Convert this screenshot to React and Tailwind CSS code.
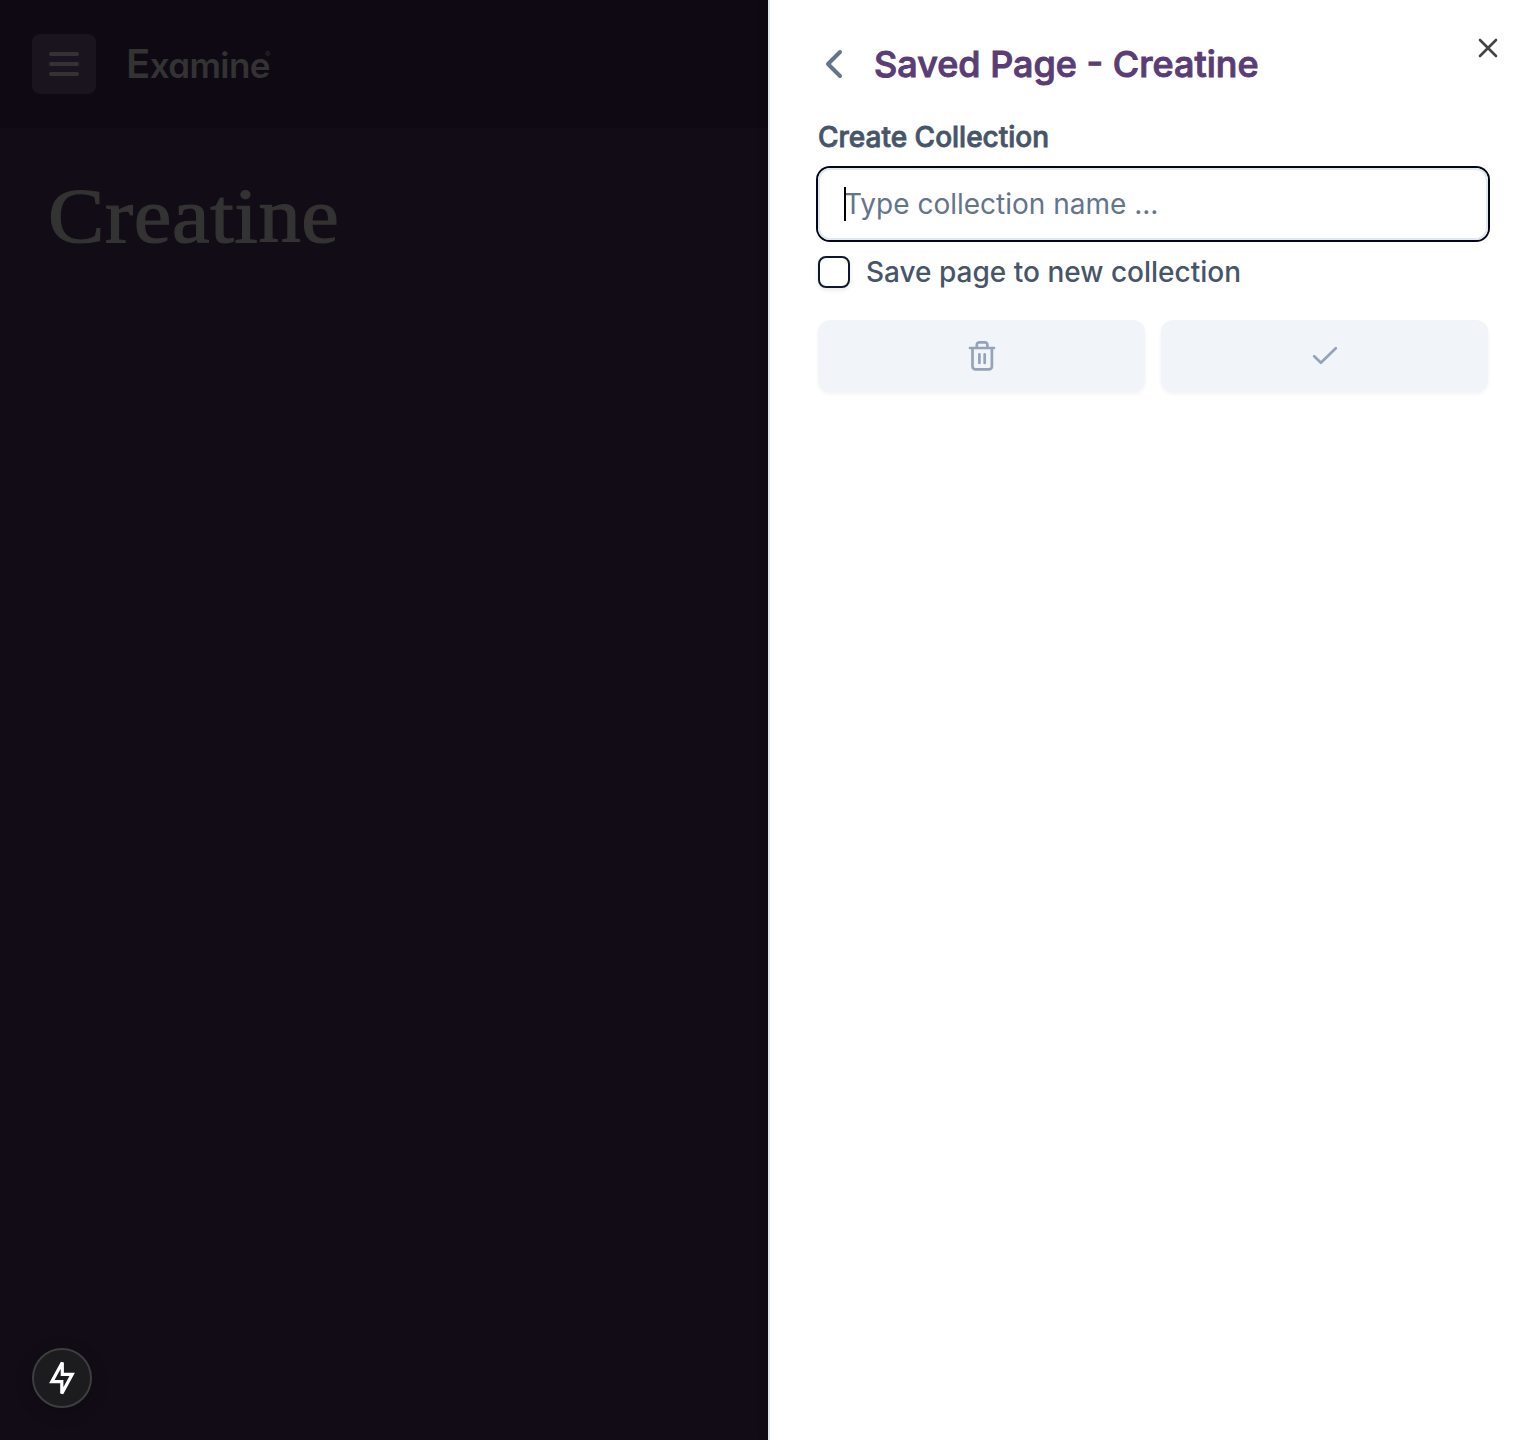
function MenuIcon() {
  return (
    <svg viewBox="0 0 32 24" className="h-6 w-8" fill="none" stroke="#333333" strokeWidth="4" strokeLinecap="round">
      <path d="M3 2h26M3 12h26M3 22h26" />
    </svg>
  );
}

function Backdrop() {
  return (
    <div className="relative flex h-full w-[768px] flex-col bg-[#120c16]">
      <header className="flex h-32 items-center bg-[#0f0913] pl-8">
        <button aria-label="Menu" className="flex h-[60px] w-16 items-center justify-center rounded-lg bg-[#1a141e]">
          <MenuIcon />
        </button>
        <div className="ml-[30px] flex items-start whitespace-nowrap font-['Inter',sans-serif] font-semibold text-[#333333]">
          <div className="w-[144px] text-[35px] leading-[58px] tracking-[-0.6px] first-letter:text-[40px] [font-feature-settings:'cv11']">
            Examine
          </div>
          <span className="-ml-[5px] mt-[12px] text-[8px] leading-[14px]">®</span>
        </div>
      </header>
      <h1 className="ml-12 mt-[43px] origin-left scale-x-[1.07] font-['Liberation_Serif',serif] text-[79px] leading-[90px] tracking-[0.6px] text-[#333333] [-webkit-text-stroke:1.2px_#333333]">
        Creatine
      </h1>
      <button
        aria-label="Quick actions"
        className="absolute bottom-8 left-8 flex size-[60px] items-center justify-center rounded-full border-2 border-[#3e3e40] bg-[#1c1c1e] shadow-[0_4px_16px_rgba(0,0,0,0.25)]"
      >
        <svg viewBox="0 0 32 36" className="h-9 w-8" fill="none" stroke="#ffffff" strokeWidth="3.2" strokeMiterlimit="3">
          <path d="M16.3 2.5V14.3H26.2L15.8 33.5V21.7H5.8Z" />
        </svg>
      </button>
    </div>
  );
}

function SavedPanel() {
  return (
    <aside className="relative h-full w-[768px] border-l-2 border-[#e2e8f0] bg-white pl-12 pr-12 font-['Inter',sans-serif] shadow-[0_0_12px_rgba(0,0,0,0.1)]">
      <button aria-label="Close" className="absolute right-8 top-8 flex size-8 items-center justify-center">
        <svg viewBox="0 0 32 32" className="size-8" fill="none" stroke="#444444" strokeWidth="2.6" strokeLinecap="round">
          <path d="M8 8l16 16M24 8L8 24" />
        </svg>
      </button>
      <div className="flex h-[72px] items-end">
        <button aria-label="Back" className="mb-[-10px] flex h-9 w-8 items-center justify-center">
          <svg viewBox="0 0 32 36" className="h-9 w-8" fill="none" stroke="#64748b" strokeWidth="4" strokeLinecap="round" strokeLinejoin="round">
            <path d="M22 6L10 18l12 12" />
          </svg>
        </button>
        <h2 className="mb-[-16px] ml-6 whitespace-nowrap text-[36px] font-medium leading-[48px] text-[#5a3d74] [-webkit-text-stroke:1px_#5a3d74]">
          Saved Page - Creatine
        </h2>
      </div>
      <div className="mt-[46px] text-[28px] font-medium leading-[38px] text-[#475569] [-webkit-text-stroke:0.8px_#475569]">
        Create Collection
      </div>
      <div className="relative mt-3 h-[72px] rounded-xl border-2 border-[#e2e8f0] ring-2 ring-[#020617]">
        <input
          aria-label="Collection name"
          placeholder="Type collection name ..."
          className="h-full w-full rounded-xl bg-white px-6 text-[28px] text-slate-900 outline-none placeholder:text-[#64748b]"
        />
        <span className="absolute left-6 top-[17px] h-[34px] w-[2px] bg-black" />
      </div>
      <label className="mt-4 flex h-8 items-center gap-4 text-[28px] font-medium leading-8 text-[#475569]">
        <span className="size-8 rounded-lg border-2 border-[#0f172a] bg-white shadow-[0_2px_4px_rgba(0,0,0,0.1)]" />
        <span>Save page to new collection</span>
      </label>
      <div className="mt-8 grid grid-cols-2 gap-4">
        <button aria-label="Delete" className="flex h-[72px] items-center justify-center rounded-xl bg-[#f1f5f9] shadow-[0_2px_4px_rgba(0,0,0,0.05)]">
          <svg viewBox="0 0 32 32" className="size-8" fill="none" stroke="#94a3b8" strokeWidth="2.7" strokeLinecap="round" strokeLinejoin="round">
            <path d="M4 8h24M6.5 8v18.4a3 3 0 0 0 3 3h13.4a3 3 0 0 0 3-3V8M10.8 8V4.9a2.6 2.6 0 0 1 2.6-2.6h5.4a2.6 2.6 0 0 1 2.6 2.6V8M13.4 14.3v8.6M18.7 14.3v8.6" />
          </svg>
        </button>
        <button aria-label="Confirm" className="flex h-[72px] items-center justify-center rounded-xl bg-[#f1f5f9] shadow-[0_2px_4px_rgba(0,0,0,0.05)]">
          <svg viewBox="0 0 32 32" className="size-8" fill="none" stroke="#94a3b8" strokeWidth="2.7" strokeLinecap="round" strokeLinejoin="round">
            <path d="M5.2 16.2l6.7 6.5L26.8 8.2" />
          </svg>
        </button>
      </div>
    </aside>
  );
}

export default function App() {
  return (
    <div className="flex h-[1440px] w-[1536px] overflow-hidden">
      <Backdrop />
      <SavedPanel />
    </div>
  );
}
